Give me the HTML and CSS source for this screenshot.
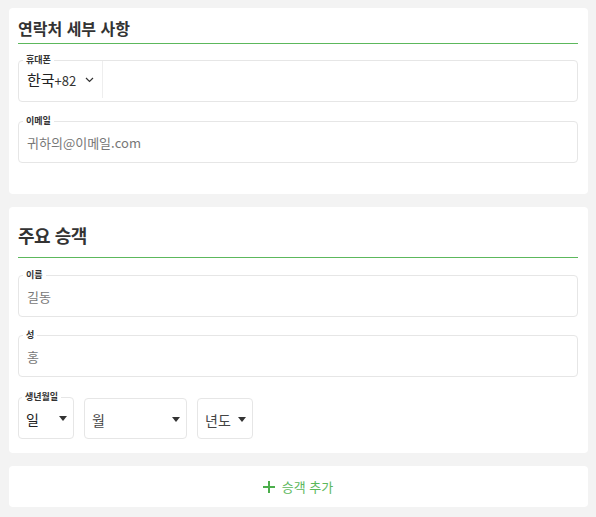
FILE: index.html
```html
<!DOCTYPE html>
<html lang="ko">
<head>
  <meta charset="UTF-8">
  <title>승객 정보</title>
  <link rel="stylesheet" href="styles.css">
</head>
<body>

<div class="card contact-card">
  <h2 class="card-title">연락처 세부 사항</h2>

  <fieldset class="field">
    <legend>휴대폰</legend>
    <div class="phone-row">
      <div class="country">
        <span class="country-name">한국</span><span class="country-code">+82</span>
        <svg class="chevron" width="9" height="6" viewBox="0 0 9 6">
          <path d="M1 1 L4.5 4.5 L8 1" fill="none" stroke="#333" stroke-width="1.2"/>
        </svg>
      </div>
      <div class="phone-input"></div>
    </div>
  </fieldset>

  <fieldset class="field">
    <legend>이메일</legend>
    <div class="field-value placeholder">귀하의@이메일.com</div>
  </fieldset>
</div>

<div class="card passenger-card">
  <h2 class="card-title big">주요 승객</h2>

  <fieldset class="field">
    <legend>이름</legend>
    <div class="field-value placeholder">길동</div>
  </fieldset>

  <fieldset class="field">
    <legend>성</legend>
    <div class="field-value placeholder">홍</div>
  </fieldset>

  <div class="birth-row">
    <fieldset class="field select-box day">
      <legend>생년월일</legend>
      <div class="select-value"><span class="dark">일</span><span class="caret"></span></div>
    </fieldset>
    <div class="select-box month">
      <div class="select-value"><span>월</span><span class="caret"></span></div>
    </div>
    <div class="select-box year">
      <div class="select-value"><span>년도</span><span class="caret"></span></div>
    </div>
  </div>
</div>

<div class="card add-card">
  <svg class="plus" width="12" height="12" viewBox="0 0 12 12">
    <path d="M6 0 V12 M0 6 H12" stroke="#4cae4c" stroke-width="2"/>
  </svg>
  승객 추가
</div>

</body>
</html>
```

FILE: styles.css
```css
body {
  margin: 0;
  padding: 8px 8px 8px 9px;
  background-color: #f3f3f3;
  font-family: "Noto Sans CJK KR", "Open Sans", sans-serif;
  color: #333;
}

.card {
  background: #fff;
  border-radius: 4px;
  padding: 0 10px 0 9px;
  margin-bottom: 13px;
}

.contact-card {
  padding-bottom: 31px;
}

.passenger-card {
  padding-bottom: 14px;
}

.card-title {
  margin: 0;
  padding: 8px 0 2px;
  font-size: 16px;
  line-height: 25px;
  font-weight: bold;
  color: #333;
  border-bottom: 1px solid #5cb85c;
}

.card-title.big {
  padding: 14px 0 8px;
  font-size: 18px;
  line-height: 28px;
  letter-spacing: -0.5px;
}

.field {
  margin: 11px 0 0;
  padding: 0 8px 3px;
  border: 1px solid #e6e6e6;
  border-radius: 4px;
  min-width: 0;
}

.card-title.big + .field {
  margin-top: 12px;
}

.field + .field {
  margin-top: 14px;
}

.passenger-card .field + .field {
  margin-top: 13px;
}

.field legend {
  margin-left: -4px;
  padding: 0 3px;
  font-size: 9px;
  line-height: 10px;
  font-weight: bold;
  color: #333;
  white-space: nowrap;
}

.field-value {
  height: 33px;
  display: flex;
  align-items: center;
  font-size: 13px;
}

.placeholder {
  color: #777;
}

.phone-row {
  display: flex;
  height: 33px;
  margin-left: -8px;
}

.country {
  display: flex;
  align-items: center;
  width: 75px;
  padding-left: 8px;
  margin-top: -4px;
  border-right: 1px solid #eee;
}

.country-name {
  font-size: 15px;
  color: #222;
}

.country-code {
  font-size: 13px;
  color: #333;
  margin-top: 2px;
}

.chevron {
  margin-left: 9px;
  margin-top: 1px;
}

.birth-row {
  display: flex;
  align-items: flex-end;
  gap: 10px;
  margin-top: 15px;
}

.birth-row .field {
  margin: 0;
}

.select-box {
  box-sizing: border-box;
  border: 1px solid #e6e6e6;
  border-radius: 4px;
  padding: 0 6px 3px 7px;
}

.select-box.month, .select-box.year {
  height: 41px;
  padding-top: 4px;
}

.select-box.day {
  width: 56px;
}

.select-box.month {
  width: 103px;
}

.select-box.year {
  width: 56px;
}

.select-value {
  height: 33px;
  display: flex;
  align-items: center;
  justify-content: space-between;
  font-size: 14px;
  color: #444;
}

.select-value .dark {
  color: #222;
}

.caret {
  width: 0;
  height: 0;
  border-left: 4px solid transparent;
  border-right: 4px solid transparent;
  border-top: 5px solid #333;
}

.add-card {
  height: 41px;
  display: flex;
  align-items: center;
  justify-content: center;
  margin-bottom: 0;
  font-size: 13px;
  color: #5cb85c;
}

.plus {
  margin-right: 7px;
}
```
